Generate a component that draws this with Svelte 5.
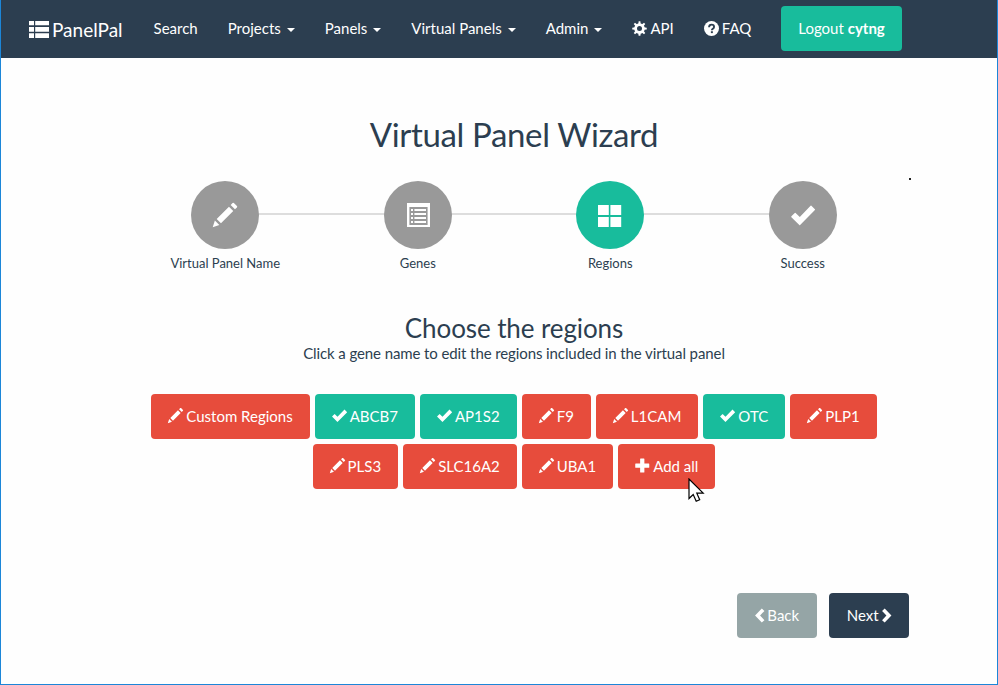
<script>
  const steps = [
    { icon: 'pencil', label: 'Virtual Panel Name' },
    { icon: 'list', label: 'Genes' },
    { icon: 'large', label: 'Regions', active: true },
    { icon: 'ok', label: 'Success' }
  ];
  const menu = [
    { label: 'Search' },
    { label: 'Projects', caret: true },
    { label: 'Panels', caret: true },
    { label: 'Virtual Panels', caret: true },
    { label: 'Admin', caret: true },
    { label: 'API', icon: 'cog' },
    { label: 'FAQ', icon: 'question' }
  ];
  const rows = [
    [
      { label: 'Custom Regions' },
      { label: 'ABCB7', done: true },
      { label: 'AP1S2', done: true },
      { label: 'F9' },
      { label: 'L1CAM' },
      { label: 'OTC', done: true },
      { label: 'PLP1' }
    ],
    [
      { label: 'PLS3' },
      { label: 'SLC16A2' },
      { label: 'UBA1' },
      { label: 'Add all', icon: 'plus' }
    ]
  ];
  const teeth = [0, 45, 90, 135, 180, 225, 270, 315];
  const listRows = [300, 500, 700, 900];
  const narrow = ['left', 'right'];
</script>

{#snippet icon(name)}
  <svg class="icon {name}" viewBox={narrow.includes(name) ? '0 0 750 1200' : '0 0 1200 1200'} fill="currentColor" aria-hidden="true">
    {#if name === 'pencil'}
      <path transform="matrix(1 0 0 -1 0 1200)" d="M1011 1210q19 0 33 -13l153 -153q13 -14 13 -33t-13 -33l-99 -92l-214 214l95 96q13 14 32 14zM1013 800l-615 -614l-214 214l614 614zM317 96l-333 -112l110 335z" />
    {:else if name === 'ok'}
      <path d="M20 708q-20-20 0-40l170-170q20-20 40 0l210 205L980 132q20-20 40 0l175 178q22 22 0 44L456 1105q-20 20-40 0z" />
    {:else if name === 'list'}
      <path fill-rule="evenodd" d="M50 0H1200V1200H50ZM170 200V1100H1080V200Z" />
      {#each listRows as y}
        <path d="M250 {y}h100v100h-100zM420 {y}h580v100h-580z" />
      {/each}
    {:else if name === 'large'}
      <path d="M0 100H540V600H0ZM620 100H1160V600H620ZM0 700H540V1200H0ZM620 700H1160V1200H620Z" />
    {:else if name === 'cog'}
      {#each teeth as a}
        <path transform="rotate({a} 600 600)" d="M500 250L530 20H670L700 250Z" />
      {/each}
      <circle cx="600" cy="600" r="310" fill="none" stroke="currentColor" stroke-width="220" />
    {:else if name === 'question'}
      <circle cx="600" cy="600" r="600" />
      <path d="M405 490Q405 290 610 290Q805 290 805 470Q805 570 700 625Q630 665 630 740" fill="none" stroke="#2c3e50" stroke-width="150" />
      <path d="M550 820H710V970H550Z" fill="#2c3e50" />
    {:else if name === 'plus'}
      <path d="M450 40H710Q750 40 750 80V430H1100Q1140 430 1140 470V730Q1140 770 1100 770H750V1120Q750 1160 710 1160H450Q410 1160 410 1120V770H60Q20 770 20 730V470Q20 430 60 430H410V80Q410 40 450 40Z" />
    {:else if name === 'left'}
      <path d="M540 40L750 230L400 600L750 970L540 1160L0 600Z" />
    {:else if name === 'right'}
      <path d="M210 40L0 230L350 600L0 970L210 1160L750 600Z" />
    {/if}
  </svg>
{/snippet}

<div class="window">
  <nav>
    <a class="brand" href="#home">
      <svg width="20" height="17" viewBox="0 0 20 17" fill="currentColor" aria-hidden="true">
        <path d="M0 0h5v4.3H0zM6.2 0H20v4.3H6.2zM0 6h5v4.7H0zM6.2 6H20v4.7H6.2zM0 12.2h5v4.8H0zM6.2 12.2H20V17H6.2z" />
      </svg>
      <span>PanelPal</span>
    </a>
    {#each menu as item}
      <a class="item" href="#{item.label}">
        {#if item.icon}{@render icon(item.icon)}{/if}
        <span>{item.label}</span>
        {#if item.caret}<i class="caret"></i>{/if}
      </a>
    {/each}
    <button class="btn green logout"><span>Logout <b>cytng</b></span></button>
  </nav>

  <main>
    <h1>Virtual Panel Wizard</h1>
    <div class="steps">
      {#each steps as step}
        <div class="step">
          <div class="circle" class:active={step.active}>{@render icon(step.icon)}</div>
          <p>{step.label}</p>
        </div>
      {/each}
      <span class="dot"></span>
    </div>

    <h2>Choose the regions</h2>
    <p class="hint">Click a gene name to edit the regions included in the virtual panel</p>

    <div class="genes">
      {#each rows as row}
        <div class="row">
          {#each row as gene}
            <button class="btn" class:green={gene.done}>
              {@render icon(gene.icon ?? (gene.done ? 'ok' : 'pencil'))}
              <span>{gene.label}</span>
            </button>
          {/each}
        </div>
      {/each}
    </div>

    <div class="pager">
      <button class="btn grey">{@render icon('left')}<span>Back</span></button>
      <button class="btn navy"><span>Next</span>{@render icon('right')}</button>
    </div>
  </main>

  <svg class="cursor" width="18" height="25" viewBox="0 0 18 25" aria-hidden="true">
    <path d="M1 1V20.5L5.2 16.5L8.2 23.2L11.7 21.7L8.8 15.2H15.2Z" fill="#fff" stroke="#000" stroke-width="1.2" />
  </svg>
</div>

<style>
  :global(body) { background: #fff; }
  .window {
    position: relative;
    box-sizing: border-box;
    width: 998px;
    height: 685px;
    overflow: hidden;
    border: 1px solid #1c86d8;
    border-top: 0;
    background: #fefefe;
    color: #2c3e50;
    font: 15px/21px Lato, sans-serif;
  }
  nav {
    display: flex;
    align-items: center;
    height: 58px;
    box-sizing: border-box;
    padding: 0 0 1px 28px;
    background: #2c3e50;
    color: #fff;
  }
  nav a { display: flex; align-items: center; color: #fff; text-decoration: none; white-space: nowrap; }
  .brand { gap: 3px; font-size: 19px; margin-right: 16px; padding-top: 2px; }
  .brand svg { margin-top: -1px; }
  .item { gap: 3px; padding: 0 15px; }
  .caret { margin: 2px 0 0 3px; border: 4px solid transparent; border-top-color: #fff; border-bottom: 0; }
  .icon { flex: none; width: 15px; height: 15px; overflow: visible; }
  .item .icon { margin-top: -1px; }
  .btn {
    display: inline-flex;
    align-items: center;
    gap: 3px;
    box-sizing: border-box;
    height: 45px;
    padding: 0 17px;
    border: 0;
    border-radius: 4px;
    background: #e74c3c;
    color: #fff;
    font: inherit;
    white-space: nowrap;
  }
  .green { background: #18bc9c; }
  .grey { background: #95a5a6; }
  .navy { background: #2c3e50; }
  .logout { margin-left: 15px; }
  main { width: 770px; margin: 0 auto 0 128px; }
  h1, h2, p { margin: 0; font-weight: 400; text-align: center; }
  h1 { padding-top: 56px; font-size: 33px; line-height: 40px; letter-spacing: -0.36px; }
  .steps { position: relative; display: flex; margin-top: 27px; }
  .step { position: relative; flex: 1; }
  .step:not(:first-child)::before {
    content: '';
    position: absolute;
    top: 32px;
    right: 50%;
    width: 100%;
    height: 2px;
    background: #ddd;
  }
  .circle {
    position: relative;
    z-index: 1;
    display: flex;
    align-items: center;
    justify-content: center;
    width: 68px;
    height: 68px;
    margin: 0 auto;
    border-radius: 50%;
    background: #999;
    color: #fff;
  }
  .circle.active { background: #18bc9c; }
  .circle .icon { width: 24px; height: 24px; }
  .step p { margin-top: 5px; font-size: 13px; line-height: 19px; }
  .dot { position: absolute; left: 780px; top: -3px; width: 2px; height: 2px; background: #222; }
  h2 { margin-top: 40px; font-size: 26px; line-height: 30px; letter-spacing: -0.1px; }
  .hint { letter-spacing: -0.1px; }
  .genes { display: flex; flex-direction: column; gap: 5px; margin-top: 30px; }
  .row { display: flex; justify-content: center; gap: 5px; }
  .row .icon { margin-top: -2px; }
  .pager { display: flex; justify-content: flex-end; gap: 12px; margin-top: 104px; margin-right: -10px; }
  .pager .btn { width: 80px; justify-content: center; padding: 0; }
  .pager .icon { width: 9.5px; height: 15px; margin-top: -1px; }
  .cursor { position: absolute; left: 687px; top: 478px; }
</style>
